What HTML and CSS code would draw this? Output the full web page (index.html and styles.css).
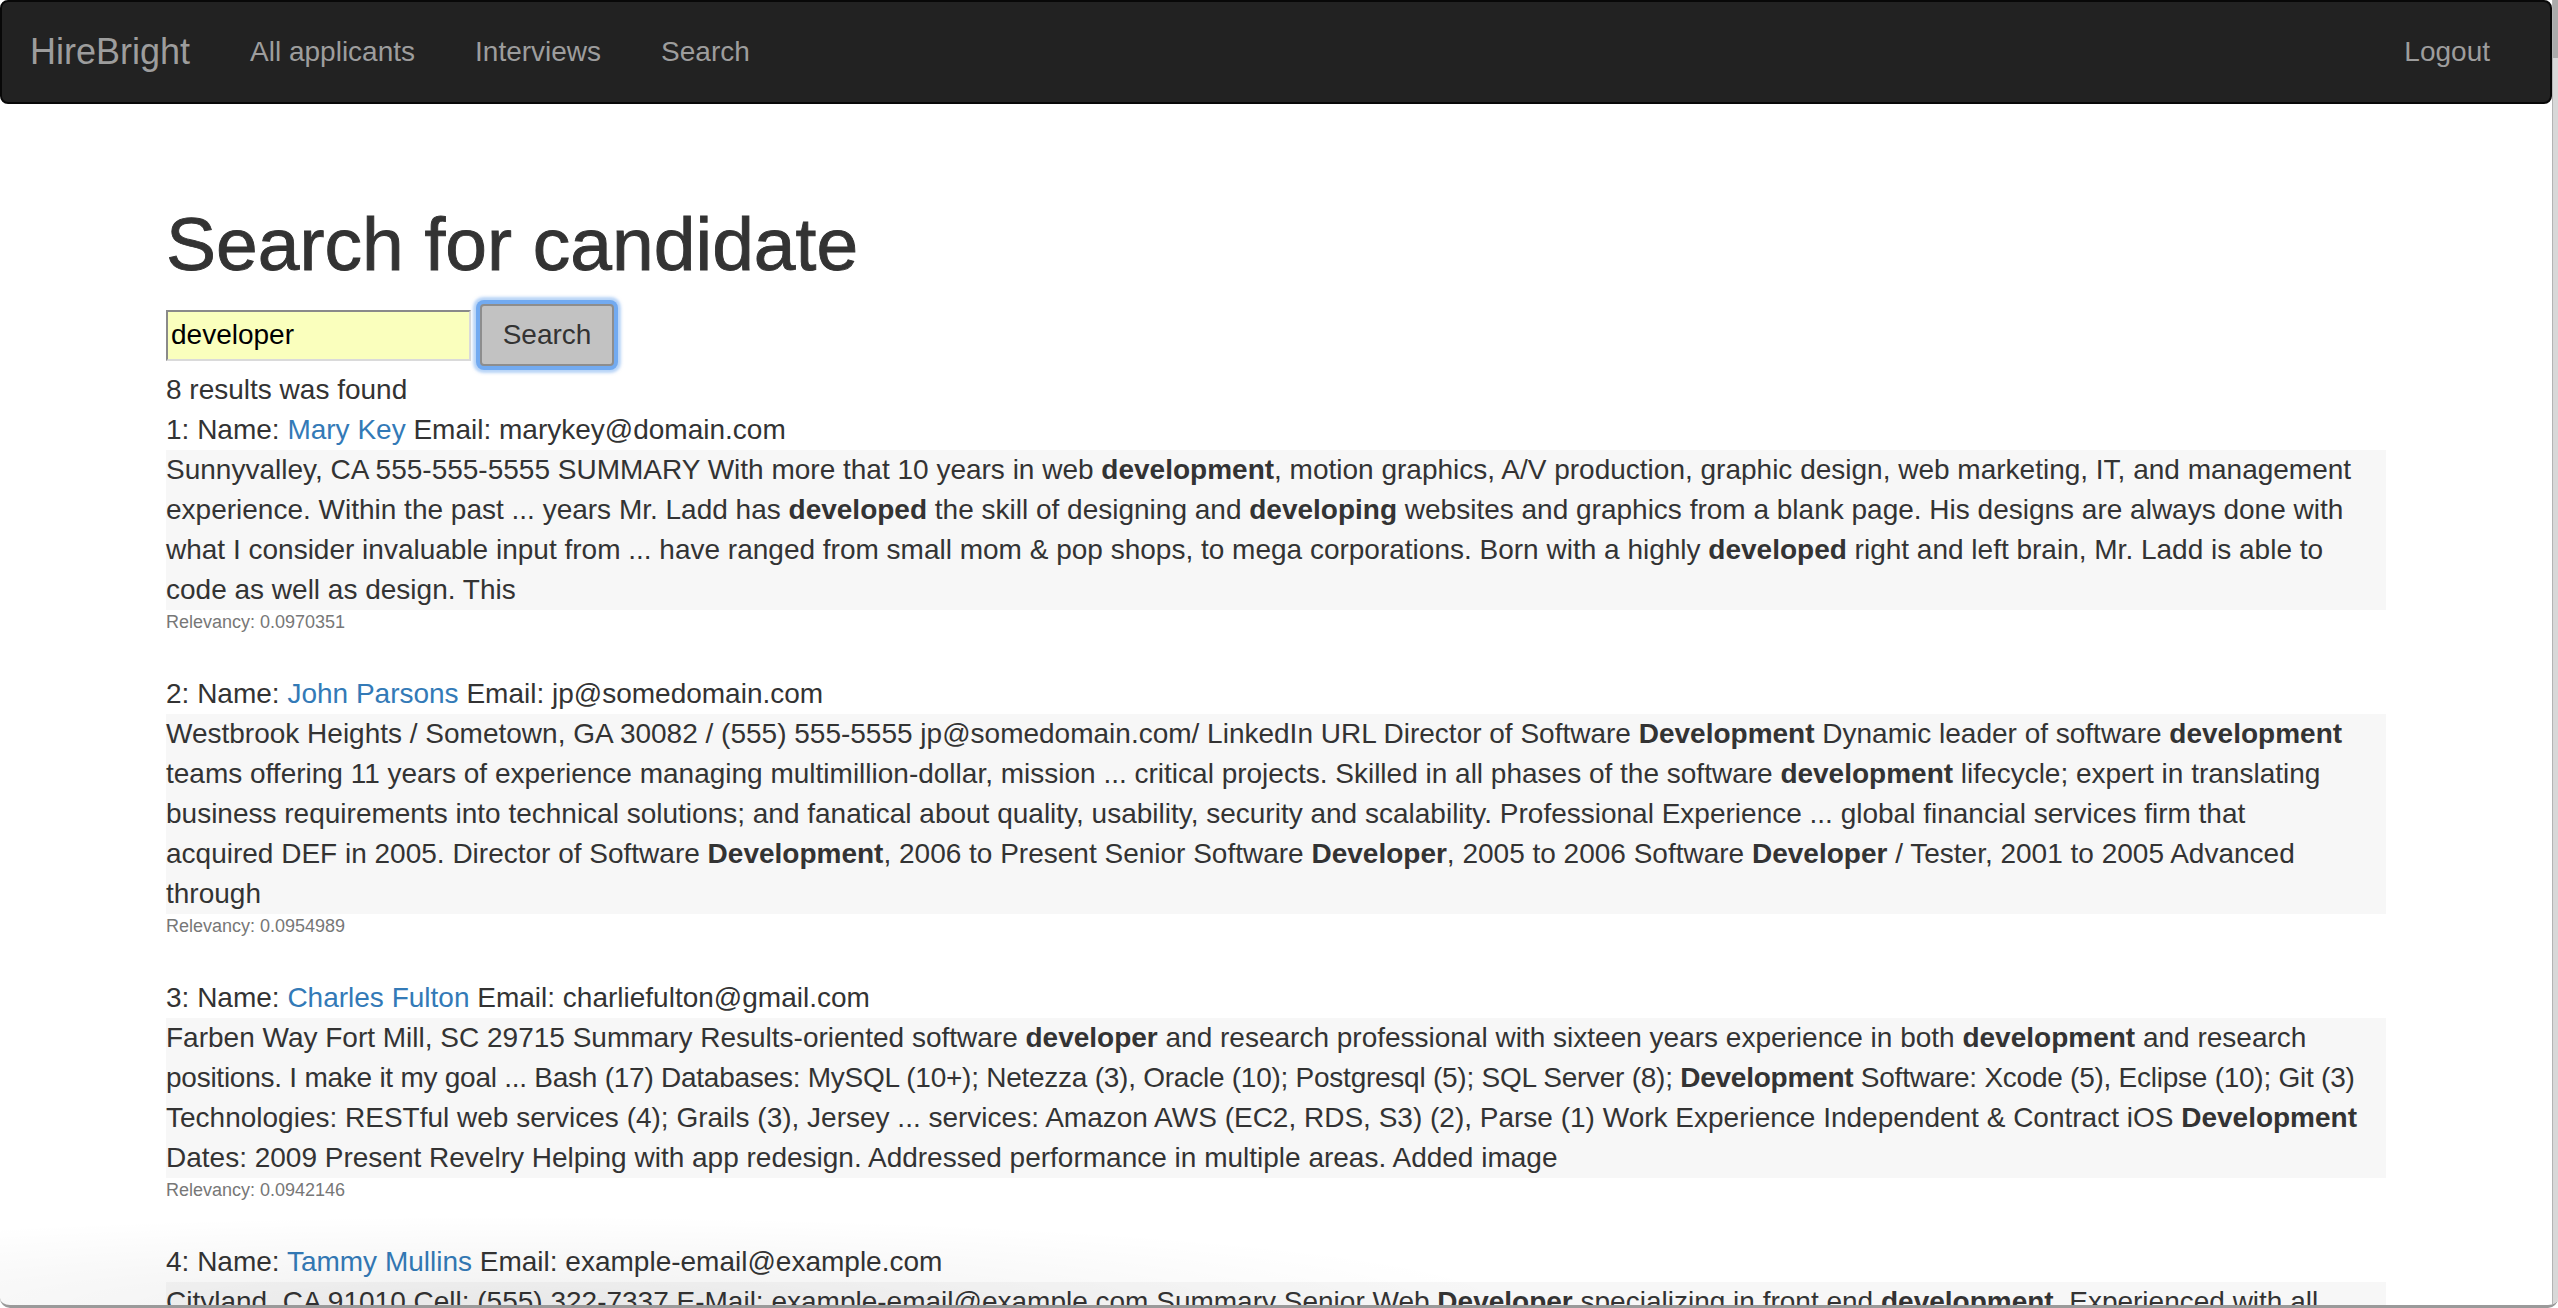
FILE: index.html
```html
<!DOCTYPE html>
<html lang="en">
<head>
<meta charset="utf-8">
<title>HireBright - Search</title>
<link rel="stylesheet" href="styles.css">
</head>
<body>
<div class="window">
  <div class="viewport">
    <nav class="navbar">
      <a class="brand" href="#">HireBright</a>
      <ul class="nav">
        <li><a href="#">All applicants</a></li>
        <li><a href="#">Interviews</a></li>
        <li><a href="#">Search</a></li>
      </ul>
      <ul class="nav nav-right">
        <li><a href="#">Logout</a></li>
      </ul>
    </nav>
    <main class="container">
      <h1 class="title">Search for candidate</h1>
      <form class="search-form">
        <input class="search-input" type="text" value="developer">
        <button class="search-btn" type="button">Search</button>
      </form>
      <div class="count">8 results was found</div>

      <div class="result">
        <div class="result-head">1: Name: <a href="#">Mary Key</a> Email: marykey@domain.com</div>
        <div class="snippet">Sunnyvalley, CA 555-555-5555 SUMMARY With more that 10 years in web <b>development</b>, motion graphics, A/V production, graphic design, web marketing, IT, and management<br>experience. Within the past ... years Mr. Ladd has <b>developed</b> the skill of designing and <b>developing</b> websites and graphics from a blank page. His designs are always done with<br>what I consider invaluable input from ... have ranged from small mom &amp; pop shops, to mega corporations. Born with a highly <b>developed</b> right and left brain, Mr. Ladd is able to<br>code as well as design. This</div>
        <small class="relevancy">Relevancy: 0.0970351</small>
      </div>

      <div class="result">
        <div class="result-head">2: Name: <a href="#">John Parsons</a> Email: jp@somedomain.com</div>
        <div class="snippet">Westbrook Heights / Sometown, GA 30082 / (555) 555-5555 jp@somedomain.com/ LinkedIn URL Director of Software <b>Development</b> Dynamic leader of software <b>development</b><br>teams offering 11 years of experience managing multimillion-dollar, mission ... critical projects. Skilled in all phases of the software <b>development</b> lifecycle; expert in translating<br>business requirements into technical solutions; and fanatical about quality, usability, security and scalability. Professional Experience ... global financial services firm that<br>acquired DEF in 2005. Director of Software <b>Development</b>, 2006 to Present Senior Software <b>Developer</b>, 2005 to 2006 Software <b>Developer</b> / Tester, 2001 to 2005 Advanced<br>through</div>
        <small class="relevancy">Relevancy: 0.0954989</small>
      </div>

      <div class="result">
        <div class="result-head">3: Name: <a href="#">Charles Fulton</a> Email: charliefulton@gmail.com</div>
        <div class="snippet">Farben Way Fort Mill, SC 29715 Summary Results-oriented software <b>developer</b> and research professional with sixteen years experience in both <b>development</b> and research<br><span class="tight">positions. I make it my goal ... Bash (17) Databases: MySQL (10+); Netezza (3), Oracle (10); Postgresql (5); SQL Server (8); <b>Development</b> Software: Xcode (5), Eclipse (10); Git (3)</span><br>Technologies: RESTful web services (4); Grails (3), Jersey ... services: Amazon AWS (EC2, RDS, S3) (2), Parse (1) Work Experience Independent &amp; Contract iOS <b>Development</b><br>Dates: 2009 Present Revelry Helping with app redesign. Addressed performance in multiple areas. Added image</div>
        <small class="relevancy">Relevancy: 0.0942146</small>
      </div>

      <div class="result">
        <div class="result-head">4: Name: <a href="#">Tammy Mullins</a> Email: example-email@example.com</div>
        <div class="snippet">Cityland, CA 91010 Cell: (555) 322-7337 E-Mail: example-email@example.com Summary Senior Web <b>Developer</b> specializing in front end <b>development</b>. Experienced with all<br>aspects of the web <b>development</b> lifecycle ...</div>
        <small class="relevancy">Relevancy: 0.0931187</small>
      </div>
    </main>
    <div class="shade"></div>
  </div>
  <div class="scrollbar"><div class="thumb"></div></div>
</div>
</body>
</html>
```

FILE: styles.css
```css
html, body {
  margin: 0;
  padding: 0;
  height: 100%;
  overflow: hidden;
  background: #fff;
}

body {
  font-family: "Liberation Sans", Arial, sans-serif;
  font-size: 28px;
  line-height: 40px;
  color: #333;
}

.window {
  display: flex;
  height: 1308px;
  box-sizing: border-box;
  border-bottom: 3px solid #9a9a9a;
  border-bottom-left-radius: 10px;
  border-bottom-right-radius: 10px;
  overflow: hidden;
}

.viewport {
  flex: 1;
  min-width: 0;
  overflow: hidden;
  position: relative;
  border-right: 1px solid #b4b4b4;
}

.shade {
  position: absolute;
  left: 0;
  bottom: 0;
  width: 1700px;
  height: 90px;
  background: radial-gradient(ellipse 60% 100% at 30% 100%, rgba(0, 0, 0, 0.06), rgba(0, 0, 0, 0) 100%);
  pointer-events: none;
}

.scrollbar {
  width: 5px;
  background: #d8d8d8;
  display: flex;
  flex-direction: column;
}

.thumb {
  height: 58px;
  background: #ababab;
}

/* Navbar */
.navbar {
  height: 104px;
  box-sizing: border-box;
  background: #222;
  border: 2px solid #080808;
  border-radius: 8px;
  display: flex;
  align-items: center;
  padding: 0 30px 0 0;
}

.brand {
  font-size: 36px;
  line-height: 40px;
  color: #9d9d9d;
  text-decoration: none;
  padding: 0 30px 0 28px;
}

.nav {
  display: flex;
  list-style: none;
  margin: 0;
  padding: 0;
}

.nav a {
  display: block;
  padding: 0 30px;
  color: #9d9d9d;
  text-decoration: none;
  font-size: 28px;
  line-height: 40px;
}

.nav-right {
  margin-left: auto;
}

/* Content */
.container {
  max-width: 2220px;
  margin: 0 auto;
}

.title {
  font-size: 75px;
  line-height: 79px;
  font-weight: 500;
  margin: 101px 0 0;
  color: #333;
  -webkit-text-stroke: 0.9px #333;
}

.search-form {
  display: flex;
  align-items: center;
  height: 70px;
  margin: 16px 0 0;
}

.search-input {
  width: 305px;
  height: 51px;
  box-sizing: border-box;
  border-style: solid;
  border-width: 2px;
  border-color: #8a8a8a #dadada #dadada #8a8a8a;
  background: rgb(250, 255, 189);
  font-family: "Liberation Sans", Arial, sans-serif;
  font-size: 28px;
  color: #000;
  padding: 0 3px;
  margin: 0;
}

.search-btn {
  margin-left: 9px;
  width: 134px;
  height: 62px;
  box-sizing: border-box;
  background: #c2c2c2;
  border: 2px solid #8d8d8d;
  border-radius: 4px;
  font-family: "Liberation Sans", Arial, sans-serif;
  font-size: 28px;
  color: #333;
  padding: 0;
  box-shadow: 0 0 0 4px #72aaf0, 0 0 3px 7px rgba(114, 170, 240, 0.5);
}

.count {
  height: 40px;
}

.result {
  margin-bottom: 40px;
}

.result-head a {
  color: #337ab7;
  text-decoration: none;
}

.snippet {
  background: #f7f7f7;
  white-space: nowrap;
}

.tight {
  letter-spacing: -0.25px;
}

.snippet b {
  color: #333;
}

.relevancy {
  display: block;
  font-size: 18px;
  line-height: 24px;
  color: #777;
}
```
